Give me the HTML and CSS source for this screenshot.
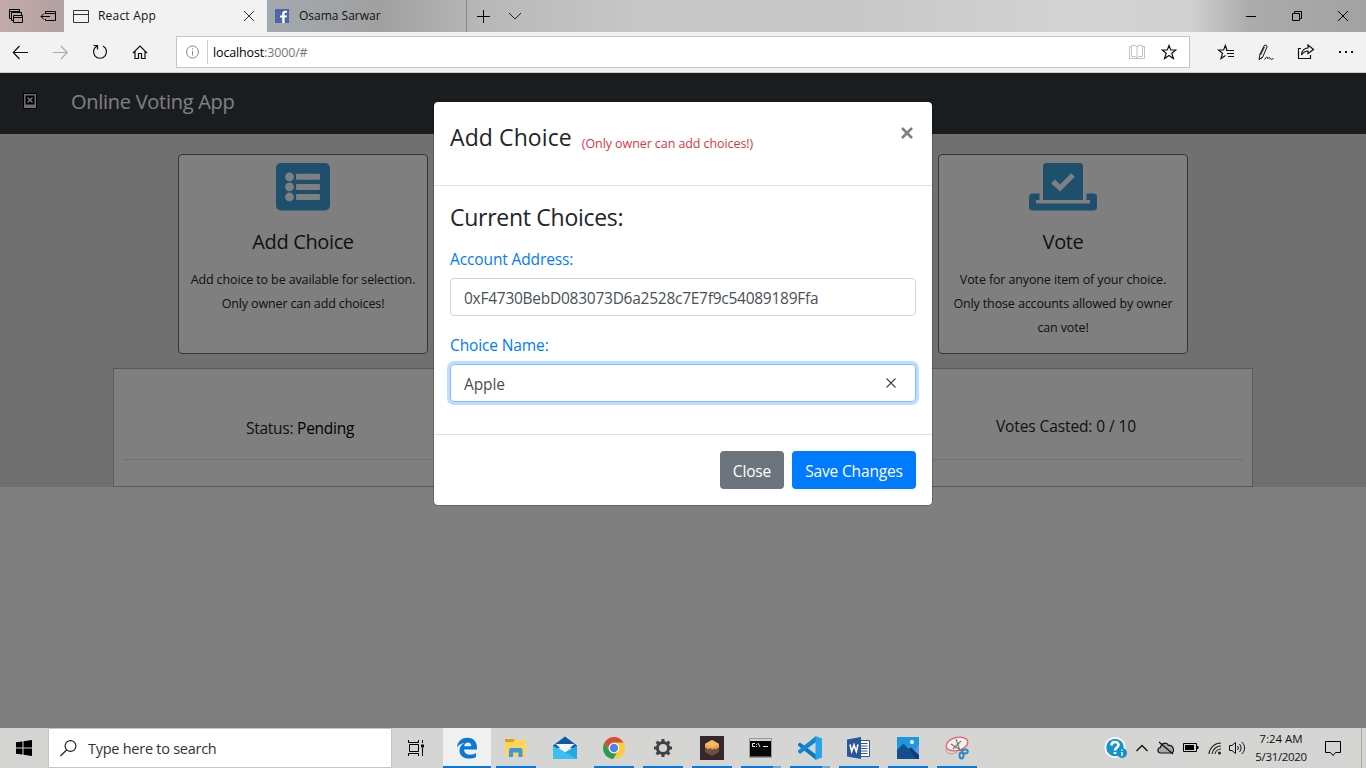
FILE: index.html
```html
<!DOCTYPE html>
<html lang="en">
<head>
<meta charset="utf-8">
<title>React App</title>
<link rel="stylesheet" href="styles.css">
</head>
<body>
<div class="screen">
  <div class="tabstrip">
    <div class="tabtools">
      <svg width="16" height="16" viewBox="0 0 16 16" fill="none" stroke="#000"><path d="M2.500 10.500H.5V1.500H10.500V4M.5 3.500H10.500M4.500 12.500H2.500V4.500H12.500V7M4.500 7.500H13.500V14.500H4.500ZM4.500 9.500H13.500"/></svg>
      <svg width="17" height="16" viewBox="0 0 17 16" fill="none" stroke="#000"><path d="M5.500 6V3.500H15.500V12.500H5.500V11M5.500 5.500H15.500M1 8.500H10M4 5.500L1 8.500L4 11.500"/></svg>
    </div>
    <div class="tab active">
      <svg class="favicon" width="16" height="14" viewBox="0 0 16 14" fill="none" stroke="#333"><path d="M.5 1.500H15.500V13.500H.5ZM.5 5.500H15.500"/></svg>
      <span class="tabname name1">React App</span>
      <svg class="tabx" width="12" height="12" viewBox="0 0 12 12" stroke="#333" fill="none"><path d="M1 1L11 11M11 1L1 11"/></svg>
    </div>
    <div class="tab second">
      <svg class="favicon" width="14" height="14" viewBox="0 0 14 14"><path fill="#4c66a4" d="M0 0H14V14H0Z"/><path fill="#fff" d="M7.200 14V8.600H5V6.400H7.200V4.800C7.200 2.700 8.400 1.700 10.300 1.700H12V3.800H10.900C10 3.800 9.600 4.200 9.600 5V6.400H12L11.600 8.600H9.600V14Z"/></svg>
      <span class="tabname name2">Osama Sarwar</span>
    </div>
    <svg class="newtab" width="14" height="14" viewBox="0 0 14 14" stroke="#000"><path d="M7.500 1V14M1 7.500H14"/></svg>
    <svg class="tabmenu" width="14" height="8" viewBox="0 0 14 8" fill="none" stroke="#222"><path d="M1 1L7 7L13 1"/></svg>
    <div class="wincontrols">
      <svg width="12" height="12" viewBox="0 0 12 12" stroke="#000"><path d="M1 6.500H11"/></svg>
      <svg width="12" height="12" viewBox="0 0 12 12" fill="none" stroke="#000"><path d="M1.500 3.500H8.500V10.500H1.500ZM3.500 3.500V1.500H10.500V8.500H8.500"/></svg>
      <svg width="12" height="12" viewBox="0 0 12 12" stroke="#000"><path d="M1 1L11 11M11 1L1 11"/></svg>
    </div>
  </div>

  <div class="toolbar">
    <div class="nav">
      <svg width="16" height="16" viewBox="0 0 16 16" fill="none" stroke="#111" stroke-width="1.200"><path d="M1 8.500H16M7.500 2L1.300 8.500L7.500 15"/></svg>
      <svg width="16" height="16" viewBox="0 0 16 16" fill="none" stroke="#aaa" stroke-width="1.200"><path d="M1 8.500H15.500M9 2L15.200 8.500L9 15"/></svg>
      <svg width="16" height="16" viewBox="0 0 16 16" fill="none" stroke="#111" stroke-width="1.200"><path d="M5 2A6.500 6.500 0 1 0 11 2M1.500 1.500H5.500V5.500"/></svg>
      <svg width="16" height="16" viewBox="0 0 16 16" fill="none" stroke="#111" stroke-width="1.200"><path d="M1 9L8 2L15 9M3 7.500V14.500H6.500V9.500H9.500V14.500H13V7.500"/></svg>
    </div>
    <div class="address">
      <svg width="14" height="14" viewBox="0 0 14 14" fill="none" stroke="#888"><circle cx="6.500" cy="7" r="6"/><path d="M6.500 3.200V4.600M6.500 6V10.500"/></svg>
      <span class="rule"></span>
      <span class="url">localhost<span class="rest">:3000/#</span></span>
      <svg class="book" width="16" height="14" viewBox="0 0 16 14" fill="none" stroke="#c4c4c4"><path d="M2.500 1.500H.5V13.500H15.500V1.500H13.500M2.500 11.500V.5H6L8 1.500L10 .5H13.500V11.500H10L8 13L6 11.500ZM8 1.500V13"/></svg>
      <svg width="16" height="16" viewBox="0 0 16 16" fill="none" stroke="#111" stroke-width="1.200"><path d="M8 1.500L9.700 6H14.800L10.800 9.200L12.400 14.500L8 11.400L3.600 14.500L5.200 9.200L1.200 6H6.300Z"/></svg>
    </div>
    <div class="actions">
      <svg width="18" height="16" viewBox="0 0 18 16" fill="none" stroke="#111" stroke-width="1.200"><path d="M10 6L8.300 1.500L6.600 6H1.500L5.500 9.200L4 14.500L8.500 11.500M9 6.500H17M10 9.500H17M11 12.500H17"/></svg>
      <svg width="18" height="17" viewBox="0 0 18 17" fill="none" stroke="#111"><path d="M2 15.500L3 10L7 1.800C8.500 .3 10.500 1.300 10 3L5.500 13.500ZM7.500 3L3.500 11M2 15.500L5.500 13M7.500 15.500C9.500 12 11 13 10.500 14.500C12 13.500 13 13.500 13.500 15C14.500 15.800 15.500 15 16.500 14.500"/></svg>
      <svg width="18" height="16" viewBox="0 0 18 16" fill="none" stroke="#111" stroke-width="1.200"><path d="M4 4.500H1.500V14.500H13.500V11M4.500 11C5 6 8 4 11 4V1L16.500 5.500L11 9.500V7C8.500 7 6.500 8 4.500 11Z"/></svg>
      <svg width="16" height="16" viewBox="0 0 16 16" fill="#111"><path d="M1 7H3V9H1ZM7 7H9V9H7ZM13 7H15V9H13Z"/></svg>
    </div>
  </div>

  <div class="page">
    <div class="navbar">
      <svg width="14" height="16" viewBox="0 0 14 16"><path d="M0 0H14V16H0Z" fill="#000"/><path d="M1 1H13V15H1Z" fill="#ddd"/><path d="M2.500 2.500H11.500V11.500H2.500Z" fill="#000"/><path d="M4.500 4.500L9.500 9.500M9.500 4.500L4.500 9.500" stroke="#fff" stroke-width="1.300"/></svg>
      <span class="brand">Online Voting App</span>
    </div>
    <div class="content">
      <div class="cards">
        <div class="card">
          <svg width="54" height="48" viewBox="0 0 54 48"><rect width="54" height="47.500" rx="5" fill="#3ca0dc"/><g fill="#fff"><circle cx="13.500" cy="13.800" r="4.400"/><circle cx="13.500" cy="23.900" r="4.400"/><circle cx="13.500" cy="34" r="4.400"/><rect x="20" y="10.800" width="24" height="6" rx="1"/><rect x="20" y="20.900" width="24" height="6" rx="1"/><rect x="20" y="31" width="24" height="6" rx="1"/></g></svg>
          <h5 class="c-add">Add Choice</h5>
          <p class="p-add">Add choice to be available for selection.<br>Only owner can add choices!</p>
        </div>
        <div class="card">
          <svg width="68" height="48" viewBox="0 0 68 48"><g fill="#3ca0dc"><path d="M14 37V3.500Q14 0 17.500 0H50.500Q54 0 54 3.500V37Z"/><path d="M3.500 30.500H10.500V37H7V40.500H61V37H57.500V30.500H64.500Q68 30.500 68 34V44Q68 47.500 64.500 47.500H3.500Q0 47.500 0 44V34Q0 30.500 3.500 30.500Z"/></g><path d="M24 18.500L31 25L44 12" fill="none" stroke="#fff" stroke-width="5.200"/></svg>
          <h5 class="c-vote">Vote</h5>
          <p class="p-vote">Vote for anyone item of your choice.<br>Only those accounts allowed by owner<br>can vote!</p>
        </div>
      </div>
      <div class="status">
        <div class="statusrow">
          <span class="pending">Status: <b>Pending</b></span>
          <span class="votes">Votes Casted: 0 / 10</span>
        </div>
      </div>
    </div>
    <div class="backdrop">
      <div class="modal">
        <div class="mhead">
          <div class="mtitle"><h4>Add Choice</h4><small>(Only owner can add choices!)</small></div>
          <svg width="12" height="12" viewBox="0 0 12 12" stroke="#7f7f7f" stroke-width="2.600"><path d="M1 1L11 11M11 1L1 11"/></svg>
        </div>
        <div class="mbody">
          <h4 class="current">Current Choices:</h4>
          <label class="l-acc">Account Address:</label>
          <div class="input"><span class="hash">0xF4730BebD083073D6a2528c7E7f9c54089189Ffa</span></div>
          <label class="l-name">Choice Name:</label>
          <div class="input focus"><span class="apple">Apple</span>
            <svg width="10" height="10" viewBox="0 0 10 10" stroke="#444" stroke-width="1.100"><path d="M.5 .5L9.500 9.500M9.500 .5L.5 9.500"/></svg></div>
        </div>
        <div class="mfoot">
          <div class="btn grey"><span>Close</span></div>
          <div class="btn blue"><span>Save Changes</span></div>
        </div>
      </div>
    </div>
  </div>

  <div class="taskbar">
    <div class="start"><svg width="16" height="16" viewBox="0 0 16 16"><path d="M0 2.300L6.500 1.400V7.500H0ZM7.500 1.200L16 0V7.500H7.500ZM0 8.500H6.500V14.600L0 13.700ZM7.500 8.500H16V16L7.500 14.800Z"/></svg></div>
    <div class="search">
      <svg width="18" height="18" viewBox="0 0 18 18" fill="none" stroke="#222" stroke-width="1.200"><circle cx="10.500" cy="7" r="5.400"/><path d="M6.500 11L.5 17"/></svg>
      <span>Type here to search</span>
    </div>
    <div class="app taskview"><svg width="16" height="16" viewBox="0 0 16 16" fill="none" stroke="#000"><path d="M.5 0V2.500H10.500V0M1.500 4.500H10.500V11.500H1.500ZM.5 16V13.500H10.500V16M14.500 0V3M14.500 8V16" /><path d="M13 4.500H16V7.500H13Z" fill="#000" stroke="none"/></svg></div>
    <div class="app edge on"><svg width="22" height="22" viewBox="0 0 22 22"><path fill="#0a78d4" d="M1 10.500C1.500 4 6 .8 11.500 .8C18 .8 21 5.500 21 10.500V12.500H8C8.200 16 11 17.700 14 17.700C16.500 17.700 18.500 17 20 16V20C18 21.200 15.700 21.600 13 21.600C7 21.600 3.500 18 3.500 13.500C3.500 10 5.500 7.500 8.500 6C5 6.300 2.500 8 1 10.500ZM8.200 9.200H15.300C15.300 6.800 14 5.600 12 5.600C9.800 5.600 8.500 7 8.200 9.200Z"/></svg></div>
    <div class="app on"><svg width="22" height="20" viewBox="0 0 22 20"><path fill="#e0a010" d="M0 1H9L11 4H0Z"/><path fill="#ffd35c" d="M0 4H8L10 2H21V18H0Z"/><path fill="#3f97dc" d="M4 12Q4 10 6 10H15.500Q17.500 10 17.500 12V19H13.500V14.500H8V19H4Z"/></svg></div>
    <div class="app"><svg width="24" height="24" viewBox="0 0 24 24"><path fill="#0c59a4" d="M0 9.500L12 .5L24 9.500V12H0Z"/><path fill="#f5f5f5" d="M2.500 8H21.500L12 16.500Z"/><path fill="#23a8e6" d="M0 9.500L12 16.500L24 9.500V23H0Z"/><path fill="#39bff0" d="M0 10L24 23H0Z"/></svg></div>
    <div class="app on"><svg width="22" height="22" viewBox="0 0 22 22"><circle cx="11" cy="11" r="11" fill="#ffca3c"/><path fill="#d94c3c" d="M1.500 5.500A11 11 0 0 1 20.500 5.500H11A5.500 5.500 0 0 0 6.200 13.700Z"/><path fill="#289b56" d="M1.500 5.500L6.200 13.700A5.500 5.500 0 0 0 14 15.500L10.200 22A11 11 0 0 1 1.500 5.500Z"/><circle cx="11" cy="11" r="5.300" fill="#fff"/><circle cx="11" cy="11" r="4.200" fill="#4787ee"/></svg></div>
    <div class="app on"><svg width="20" height="20" viewBox="0 0 20 20" fill="none" stroke="#414141"><circle cx="10" cy="10" r="5.600" stroke-width="3"/><path stroke-width="3" d="M10 1V4M10 16V19M1 10H4M16 10H19M3.600 3.600L5.700 5.700M14.300 14.300L16.400 16.400M16.400 3.600L14.300 5.700M5.700 14.300L3.600 16.400"/></svg></div>
    <div class="app on"><svg width="24" height="24" viewBox="0 0 24 24"><path fill="#35272b" d="M0 0H24V24H0Z"/><path fill="#705044" d="M5 9H19V16L12 20L5 16Z"/><path fill="#eba84f" d="M5 8L12 4L19 8V12L17 11.500V13H15V12L13 13.500L11 12.500H9V13H7V11.500L5 12Z"/><path fill="#f3bb69" d="M5 8L12 4L19 8L12 11Z"/></svg></div>
    <div class="app on multi"><svg width="24" height="20" viewBox="0 0 24 20"><path fill="#999" d="M0 0H23V20H0Z"/><path fill="#c8d5df" d="M1 1H22V3H1Z"/><path fill="#050505" d="M1 3H22V18.500H1Z"/><path fill="none" stroke="#eee" d="M6 5.500H3.500V8.500H6M7.500 6V6.800M7.500 8V8.800M9 5L11 9M14 8.500H19"/></svg></div>
    <div class="app on multi"><svg width="24" height="24" viewBox="0 0 24 24"><path fill="#0878bf" d="M0 8L2 6.500L18 18.500V24L0 9.500Z"/><path fill="#1488cd" d="M0 16L2 18L18 6V0L0 14.500Z"/><path fill="#28a3ec" d="M17.500 0L24 2.500V21.500L17.500 24Z"/></svg></div>
    <div class="app on"><svg width="24" height="22" viewBox="0 0 24 22"><path fill="#fff" stroke="#2b579a" d="M12 3.500H22.500V19.500H12Z"/><path stroke="#2b579a" d="M14 6.500H20.500M14 9H20.500M14 11.500H20.500M14 14H20.500M14 16.500H20.500"/><path fill="#2b579a" d="M0 2.500L14 0V22L0 19.500Z"/><path fill="none" stroke="#fff" stroke-width="1.600" d="M3 7.500L4.700 14.500L7 8L9.300 14.500L11 7.500"/></svg></div>
    <div class="app on"><svg width="22" height="22" viewBox="0 0 22 22"><path fill="#1b98df" d="M0 0H22V22H0Z"/><path fill="#6592e6" d="M11 22L22 7V22Z"/><path fill="#164d8d" d="M0 13L6.500 6.500L20 22H0Z"/><path fill="#123d78" d="M11 12L14 10.500L22 18V22H19Z"/><circle cx="15" cy="5" r="2" fill="#fff"/></svg></div>
    <div class="app on"><svg width="24" height="24" viewBox="0 0 24 24" fill="none"><ellipse cx="12" cy="8" rx="11" ry="6.500" transform="rotate(-15 12 8)" fill="#f4eeee" stroke="#df6468" stroke-width="1.300"/><path stroke="#e38b8d" d="M1 12C0 17 5 20 12 16"/><path stroke="#777" stroke-width="1.200" d="M11 3L15 15M6 8L17 15M16 5L8 13"/><g stroke="#2f86c1" stroke-width="2"><ellipse cx="20" cy="15.500" rx="2.800" ry="2"/><ellipse cx="16.500" cy="19.500" rx="2" ry="3"/></g></svg></div>
    <div class="tray">
      <svg class="help" width="24" height="22" viewBox="0 0 24 22"><circle cx="11" cy="10.500" r="10.500" fill="#fff"/><circle cx="11" cy="10.500" r="8.800" fill="#1795c9"/><path d="M7.500 8.500C7.500 4 14.500 4 14.500 8C14.500 10.500 11 10.500 11 13.500M11 15V17" fill="none" stroke="#fff" stroke-width="2.600"/><circle cx="18" cy="16" r="5" fill="#168fc5"/><path d="M18 12.500V14M18 15V19" stroke="#fff" stroke-width="1.400"/></svg>
      <svg class="chev" width="12" height="8" viewBox="0 0 12 8" fill="none" stroke="#111" stroke-width="1.300"><path d="M.5 7L6 1.500L11.500 7"/></svg>
      <svg class="cloud" width="18" height="14" viewBox="0 0 18 14" fill="none" stroke="#111" stroke-width="1.200"><path fill="#aaa" d="M4 12C0 12 0 6.500 3.500 6.500C4 1.500 10 1 11.500 4.500C16.500 3.500 18.500 12 14 12Z"/><path d="M2 1L16 13"/></svg>
      <svg class="batt" width="16" height="10" viewBox="0 0 16 10"><path fill="none" stroke="#000" d="M.5 .5H13.500V8.500H.5Z"/><path d="M2 2H11V7H2ZM14 3H15.500V6H14Z"/></svg>
      <svg class="wifi" width="14" height="14" viewBox="0 0 14 14" fill="none" stroke="#222" stroke-width="1.100"><path d="M1 13A12 12 0 0 1 13 2M4 13A9 9 0 0 1 13 5M7 13A6 6 0 0 1 13 8"/><circle cx="11.500" cy="12" r="1" fill="#222"/></svg>
      <svg class="vol" width="17" height="14" viewBox="0 0 17 14" fill="none" stroke="#111"><path d="M.5 4.500H3L6.500 1.500V12.500L3 9.500H.5ZM8.500 5C9.500 6 9.500 8 8.500 9M10.500 3C12.500 5.500 12.500 8.500 10.500 11M12.800 1C16.500 4.500 16.500 9.500 12.800 13"/></svg>
      <div class="clock"><span class="time">7:24 AM</span><span class="date">5/31/2020</span></div>
      <svg class="note" width="17" height="17" viewBox="0 0 17 17" fill="none" stroke="#000"><path d="M.5 1.500H15.500V12.500H10.500L8 15.500L5.500 12.500H.5Z"/></svg>
    </div>
  </div>
</div>
</body>
</html>
```
FILE: styles.css
```css
* { box-sizing: border-box; }
body { margin: 0; font-family: "Open Sans", "Noto Sans", sans-serif; color: #212529; }
h4, h5, p { margin: 0; font-weight: 400; }
svg { display: block; flex: none; }
span, small, h4, h5, label { white-space: nowrap; }
.screen { width: 1366px; height: 768px; display: flex; flex-direction: column; overflow: hidden; }

.tabstrip { height: 32px; flex: none; display: flex; align-items: center; background: linear-gradient(90deg, #c4abab 0, #b4a1a1 55px, #a2a9ad 266px, #a0a0a0 380px, #b8b8b8 480px, #c7c7c7 640px, #c8c8c8 860px, #d3d3d3 1080px, #d0d0d0 1190px, #ababab 1250px, #a2a2a2 1366px); }
.tabtools { width: 64px; height: 32px; display: flex; align-items: center; gap: 15px; padding-left: 9px; }
.tab { height: 32px; display: flex; align-items: center; font-size: 12px; color: #111; }
.active { width: 203px; background: #f2f2f2; padding: 0 12px 0 9px; }
.second { width: 200px; padding-left: 8px; border-right: 1px solid #858585; }
.tabname { margin-left: 9px; padding-bottom: 2px; }
.second .tabname { margin-left: 10px; }
.tabx { margin-left: auto; }
.newtab { margin-left: 9px; }
.tabmenu { margin-left: 18px; }
.wincontrols { margin-left: auto; padding-right: 17px; display: flex; gap: 34px; }

.toolbar { height: 41px; flex: none; display: flex; align-items: center; background: #f2f2f2; border-bottom: 1px solid #ccc; }
.nav { width: 176px; padding-left: 12px; display: flex; gap: 24px; }
.address { width: 1014px; height: 32px; background: #fff; border: 1px solid #c5c5c5; display: flex; align-items: center; padding: 0 12px 0 9px; font-size: 12.500px; color: #000; }
.rule { width: 1px; height: 24px; background: #ccc; margin: 0 5px 0 7px; }
.rest { color: #777; }
.book { margin: 0 16px 0 auto; }
.actions { display: flex; align-items: center; gap: 22px; padding-left: 27px; }
.actions svg:last-child { margin-left: 1px; }

.page { height: 655px; flex: none; position: relative; background: #fff; }
.navbar { height: 61px; background: #343a40; display: flex; align-items: center; padding: 0 0 5px 23px; color: #fff; }
.brand { font-size: 20px; margin-left: 34px; }
.content { height: 353px; background: #e0e0e0; padding: 20px 113px 0; }
.cards { display: flex; justify-content: space-between; padding: 0 65px; }
.card { width: 250px; height: 200px; background: #fff; border: 1px solid #6a6a70; border-radius: 4px; display: flex; flex-direction: column; align-items: center; padding-top: 8px; text-align: center; }
.card h5 { font-size: 20px; line-height: 24px; margin: 19px 0 14px; }
.card p { font-size: 12.500px; line-height: 24px; white-space: nowrap; }
.status { height: 119px; margin: 14px 0 0; background: #fff; border: 1px solid #b4b4b4; padding: 0 9px; }
.statusrow { height: 91px; border-bottom: 1px solid #e3e3e3; display: flex; justify-content: space-between; padding: 47px 107px 0 123px; font-size: 15.500px; line-height: 24px; }
.pending b { font-weight: 400; color: #000; }
.votes { margin-top: -2px; }
.backdrop { position: absolute; inset: 0; background: rgba(0,0,0,.5); display: flex; justify-content: center; align-items: flex-start; padding-top: 28px; }
.modal { width: 500px; height: 405px; background: #fff; background-clip: padding-box; border: 1px solid rgba(0,0,0,.2); border-radius: 5px; display: flex; flex-direction: column; }
.mhead { height: 84px; flex: none; border-bottom: 1px solid #dee2e6; padding: 17px 19px 0 16px; display: flex; justify-content: space-between; }
.mhead svg { margin-top: 8px; }
.mtitle { display: flex; }
h4 { font-size: 23px; line-height: 36px; }
small { font-size: 12.500px; line-height: 20px; color: #dc3545; margin: 15px 0 0 10px; }
.mbody { height: 249px; flex: none; padding: 13px 16px 0; border-bottom: 1px solid #dee2e6; display: flex; flex-direction: column; }
.mbody label { color: #007bff; font-size: 15.500px; line-height: 24px; margin: 12px 0 7px; align-self: flex-start; }
.mbody .current { align-self: flex-start; }
.mbody .l-name { margin-top: 17px; }
.input { height: 38px; flex: none; border: 1px solid #ced4da; border-radius: 4px; padding: 2px 19px 0 13px; display: flex; align-items: center; justify-content: space-between; font-size: 15.500px; color: #495057; }
.focus { border-color: #80bdff; box-shadow: 0 0 0 3px #bfdeff; }
.focus svg { margin-top: -3px; }
.mfoot { display: flex; justify-content: flex-end; gap: 8px; padding: 16px 16px 0; }
.btn { height: 38px; border-radius: 4px; color: #fff; font-size: 15.500px; display: flex; align-items: center; justify-content: center; padding-top: 2px; }
.grey { width: 64px; background: #6c757d; }
.blue { width: 124px; background: #007bff; }

.taskbar { height: 40px; flex: none; display: flex; align-items: center; background: #d5d5d4; }
.start { width: 48px; display: flex; justify-content: center; }
.search { width: 344px; height: 40px; border: 1px solid #c5c5c5; background: #fff; display: flex; align-items: center; gap: 10px; padding-left: 11px; font-size: 14.500px; color: #333; }
.app { width: 49px; height: 40px; display: flex; align-items: center; justify-content: center; position: relative; }
.taskview { width: 48px; margin-right: 3px; }
.edge { width: 48px; background: #f0f0f0; }
.on::after { content: ""; position: absolute; bottom: 0; left: 5px; width: 40px; height: 2px; background: #0a78d4; }
.edge::after { left: 0; width: 48px; }
.multi::after { background: linear-gradient(90deg, #0a78d4 32px, #6aaae4 32px); }
.tray { height: 40px; margin-left: auto; margin-right: 4px; padding-right: 19px; border-right: 1px solid #aaa; display: flex; align-items: center; }
.chev { margin-left: 8px; }
.cloud { margin-left: 9px; }
.batt { margin-left: 8px; }
.wifi { margin-left: 9px; }
.vol { margin-left: 7px; }
.clock { width: 70px; display: flex; flex-direction: column; align-items: center; font-size: 11.500px; line-height: 18px; color: #111; }
.note { margin-left: 9px; }

/* tracking */
.name1 { letter-spacing: .2px; }
.name2 { letter-spacing: 0; }
.url { letter-spacing: -.15px; }
.brand { letter-spacing: -.28px; }
.card h5 { letter-spacing: -.36px; }
.card p { letter-spacing: -.13px; }
small { letter-spacing: -.08px; }
.pending, .hash, .search { letter-spacing: -.26px; }
.votes { letter-spacing: -.1px; }
.mbody label, .apple { letter-spacing: -.12px; }
.btn { letter-spacing: -.16px; }
h4 { letter-spacing: .1px; }
.current { letter-spacing: -.28px; }
.time { letter-spacing: 0; }
.date { letter-spacing: -.35px; }
```
